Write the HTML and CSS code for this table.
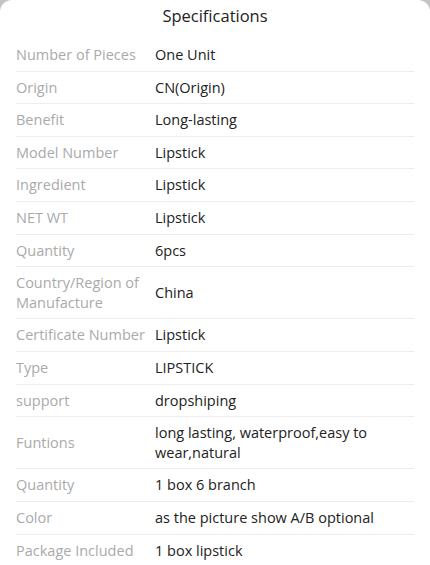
FILE: index.html
```html
<!DOCTYPE html>
<html lang="en">
<head>
<meta charset="utf-8">
<title>Specifications</title>
<link rel="stylesheet" href="styles.css">
</head>
<body>
<div class="sheet">
  <h1 class="title">Specifications</h1>
  <div class="specs">
    <div class="row"><div class="label">Number of Pieces</div><div class="value">One Unit</div></div>
    <div class="row"><div class="label">Origin</div><div class="value">CN(Origin)</div></div>
    <div class="row"><div class="label">Benefit</div><div class="value">Long-lasting</div></div>
    <div class="row"><div class="label">Model Number</div><div class="value">Lipstick</div></div>
    <div class="row"><div class="label">Ingredient</div><div class="value">Lipstick</div></div>
    <div class="row"><div class="label">NET WT</div><div class="value">Lipstick</div></div>
    <div class="row"><div class="label">Quantity</div><div class="value">6pcs</div></div>
    <div class="row"><div class="label">Country/Region of Manufacture</div><div class="value">China</div></div>
    <div class="row"><div class="label">Certificate Number</div><div class="value">Lipstick</div></div>
    <div class="row"><div class="label">Type</div><div class="value">LIPSTICK</div></div>
    <div class="row"><div class="label">support</div><div class="value">dropshiping</div></div>
    <div class="row"><div class="label">Funtions</div><div class="value">long lasting, waterproof,easy to wear,natural</div></div>
    <div class="row"><div class="label">Quantity</div><div class="value">1 box 6 branch</div></div>
    <div class="row"><div class="label">Color</div><div class="value">as the picture show A/B optional</div></div>
    <div class="row"><div class="label">Package Included</div><div class="value">1 box lipstick</div></div>
  </div>
</div>
</body>
</html>
```
FILE: styles.css
```css
html, body {
  margin: 0;
  padding: 0;
}
body {
  background: #c4c4c4;
  font-family: "Open Sans", "Noto Sans", sans-serif;
  height: 565px;
  overflow: hidden;
}
.sheet {
  background: #fff;
  border-radius: 12px 12px 0 0;
  min-height: 565px;
}
.title {
  margin: 0;
  font-size: 16.5px;
  font-weight: 400;
  color: #222;
  text-align: center;
  line-height: 20px;
  padding: 6px 0 13px;
}
.specs {
  padding: 0 16px;
}
.row {
  display: flex;
  align-items: center;
  gap: 7px;
  padding: 6px 0;
  border-bottom: 1px solid #ededed;
  font-size: 14.5px;
  line-height: 19.6px;
}
.label {
  flex: 0 0 132px;
  color: #aaaaaa;
}
.value {
  flex: 1;
  color: #222;
}
```
